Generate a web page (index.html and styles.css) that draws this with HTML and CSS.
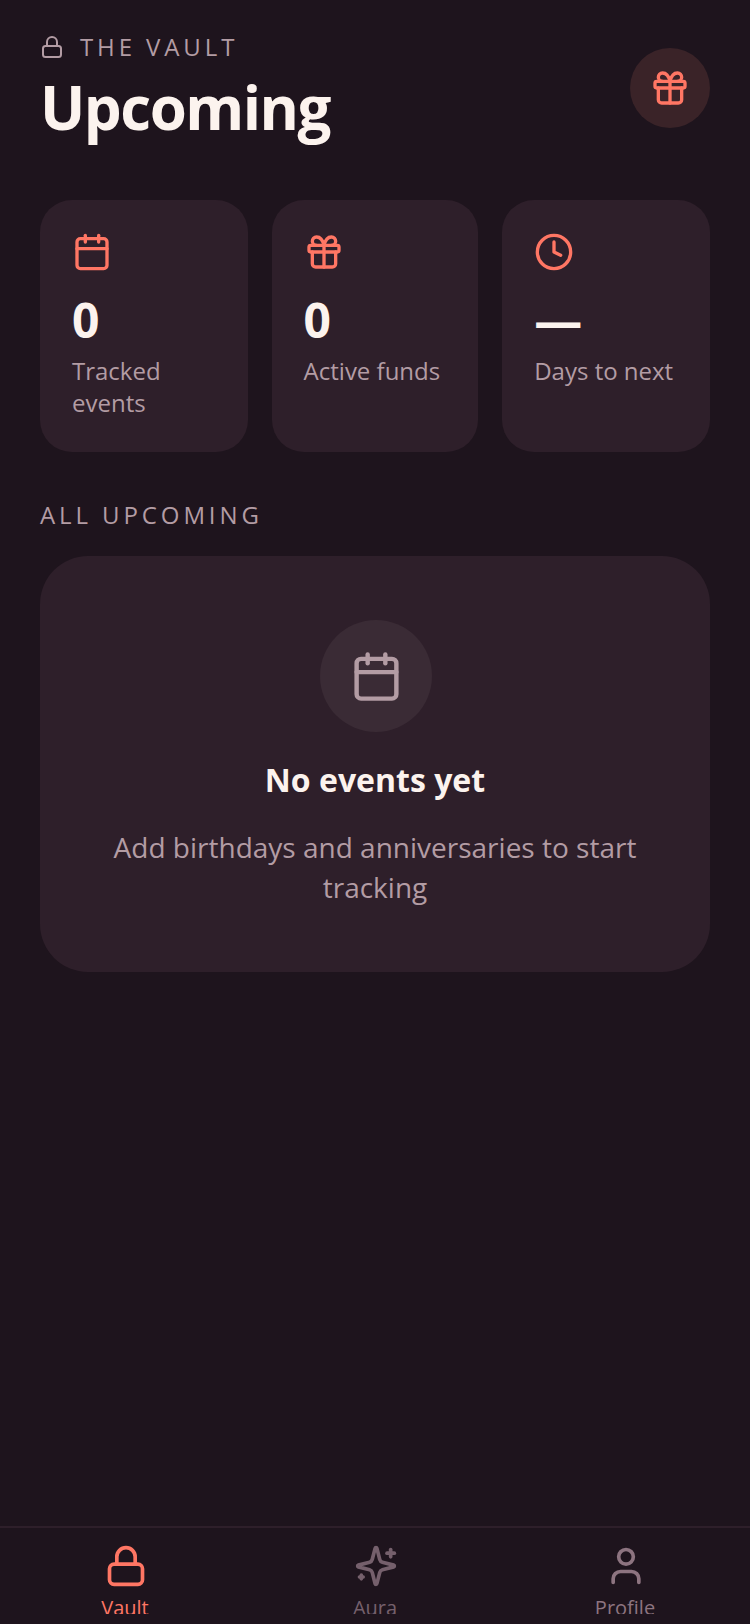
FILE: index.html
```html
<!DOCTYPE html>
<html lang="en">
<head>
<meta charset="utf-8">
<title>Upcoming</title>
<link rel="stylesheet" href="styles.css">
</head>
<body>
<div class="app">
  <main class="main">
    <header class="header">
      <div class="heading">
        <div class="eyebrow">
          <svg class="eyebrow-icon" viewBox="0 0 24 24"><rect x="3" y="11" width="18" height="11" rx="2.5"/><path d="M7 11V7a5 5 0 0 1 10 0v4"/></svg>
          <span>THE VAULT</span>
        </div>
        <h1 class="title">Upcoming</h1>
      </div>
      <div class="gift-btn">
        <svg class="icon-40" viewBox="0 0 24 24"><rect x="3" y="8" width="18" height="4" rx="1"/><path d="M12 8v13"/><path d="M19 12v7a2 2 0 0 1-2 2H7a2 2 0 0 1-2-2v-7"/><path d="M7.5 8a2.5 2.5 0 0 1 0-5A4.8 8 0 0 1 12 8a4.8 8 0 0 1 4.5-5 2.5 2.5 0 0 1 0 5"/></svg>
      </div>
    </header>

    <section class="stats">
      <div class="stat">
        <svg class="icon-40" viewBox="0 0 24 24"><path d="M8 2v4"/><path d="M16 2v4"/><rect x="3" y="4" width="18" height="18" rx="2"/><path d="M3 10h18"/></svg>
        <div class="stat-value">0</div>
        <div class="stat-label">Tracked events</div>
      </div>
      <div class="stat">
        <svg class="icon-40" viewBox="0 0 24 24"><rect x="3" y="8" width="18" height="4" rx="1"/><path d="M12 8v13"/><path d="M19 12v7a2 2 0 0 1-2 2H7a2 2 0 0 1-2-2v-7"/><path d="M7.5 8a2.5 2.5 0 0 1 0-5A4.8 8 0 0 1 12 8a4.8 8 0 0 1 4.5-5 2.5 2.5 0 0 1 0 5"/></svg>
        <div class="stat-value">0</div>
        <div class="stat-label">Active funds</div>
      </div>
      <div class="stat">
        <svg class="icon-40" viewBox="0 0 24 24"><circle cx="12" cy="12" r="10"/><path d="M12 6v6l4 2"/></svg>
        <div class="stat-value">—</div>
        <div class="stat-label">Days to next</div>
      </div>
    </section>

    <h2 class="section-title">ALL UPCOMING</h2>

    <section class="empty">
      <div class="empty-circle">
        <svg class="icon-53" viewBox="0 0 24 24"><path d="M8 2v4"/><path d="M16 2v4"/><rect x="3" y="4" width="18" height="18" rx="2"/><path d="M3 10h18"/></svg>
      </div>
      <h3 class="empty-title">No events yet</h3>
      <p class="empty-text">Add birthdays and anniversaries to start tracking</p>
    </section>
  </main>

  <nav class="nav">
    <div class="tab tab-active">
      <svg class="tab-icon" viewBox="0 0 24 24"><rect x="3" y="11" width="18" height="11" rx="2.5"/><path d="M7 11V7a5 5 0 0 1 10 0v4"/></svg>
      <span class="tab-label">Vault</span>
    </div>
    <div class="tab tab-aura">
      <svg class="tab-icon" viewBox="0 0 24 24"><path d="M9.937 15.5A2 2 0 0 0 8.5 14.063l-6.135-1.582a.5.5 0 0 1 0-.962L8.5 9.936A2 2 0 0 0 9.937 8.5l1.582-6.135a.5.5 0 0 1 .963 0L14.063 8.500A2 2 0 0 0 15.5 9.937l6.135 1.581a.5.5 0 0 1 0 .964L15.500 14.063a2 2 0 0 0-1.437 1.437l-1.582 6.135a.5.5 0 0 1-.963 0z"/><path d="M20 3v4"/><path d="M22 5h-4"/><path d="M4 17v2"/><path d="M5 18H3"/></svg>
      <span class="tab-label">Aura</span>
    </div>
    <div class="tab tab-profile">
      <svg class="tab-icon" viewBox="0 0 24 24"><circle cx="12" cy="7" r="4"/><path d="M19 21v-2a4 4 0 0 0-4-4H9a4 4 0 0 0-4 4v2"/></svg>
      <span class="tab-label">Profile</span>
    </div>
  </nav>
</div>
</body>
</html>
```

FILE: styles.css
```css
* { box-sizing: border-box; margin: 0; padding: 0; }
html, body { height: 100%; }
body {
  background: #1e141d;
  font-family: "Open Sans", "Liberation Sans", sans-serif;
  color: #fcf3ee;
  overflow: hidden;
}
svg { fill: none; stroke: currentColor; stroke-width: 2; stroke-linecap: round; stroke-linejoin: round; display: block; flex: none; }
.app { height: 1624px; display: flex; flex-direction: column; }
.main { flex: 1; padding: 31px 40px 0; }

.header { display: flex; justify-content: space-between; align-items: flex-start; }
.eyebrow { display: flex; align-items: center; gap: 16px; height: 30px; color: #b39ca4; font-size: 24px; font-weight: 400; letter-spacing: 3.9px; }
.eyebrow-icon { width: 24px; height: 24px; margin-top: 2px; }
.title { margin-top: 10px; font-size: 60px; line-height: 72px; font-weight: 700; letter-spacing: -1.5px; color: #fcf3ee; }
.gift-btn { width: 80px; height: 80px; margin-top: 17px; border-radius: 50%; background: #3a2328; display: flex; align-items: center; justify-content: center; }
.icon-40 { width: 40px; height: 40px; color: #ff7664; }
.icon-53 { width: 53px; height: 53px; color: #b39ca4; }

.stats { display: grid; grid-template-columns: 207.6fr 206.6fr 207.8fr; gap: 24px; margin-top: 57px; }
.stat { background: #2e1f2a; border-radius: 32px; padding: 32px; height: 252px; }
.stat-value { margin-top: 17px; font-size: 48px; line-height: 62px; font-weight: 700; color: #fcf3ee; }
.stat-label { margin-top: 4px; font-size: 24px; line-height: 32px; color: #b39ca4; }

.section-title { margin-top: 48px; font-size: 24px; line-height: 30px; font-weight: 400; letter-spacing: 3.9px; color: #b39ca4; }

.empty { margin-top: 26px; background: #2e1f2a; border-radius: 48px; height: 416px; padding: 64px 48px 0; display: flex; flex-direction: column; align-items: center; text-align: center; }
.empty-circle { width: 112px; height: 112px; margin-left: 2px; border-radius: 50%; background: #3a2b35; display: flex; align-items: center; justify-content: center; }
.empty-title { margin-top: 24px; font-size: 32px; line-height: 48px; font-weight: 700; color: #fcf3ee; }
.empty-text { margin-top: 23px; font-size: 28px; line-height: 40px; color: #b39ca4; }

.nav { height: 98px; flex: none; border-top: 2px solid #2e1f2a; display: grid; grid-template-columns: repeat(3, 1fr); padding: 0 0 10px; }
.tab { display: flex; flex-direction: column; align-items: center; padding-top: 16px; overflow: hidden; }
.tab-icon { width: 44px; height: 44px; margin-left: 2px; }
.tab-label { margin-top: 6px; font-size: 20px; line-height: 28px; }
.tab-active { color: #ff7664; }
.tab-aura { color: #75606c; }
.tab-profile { color: #8d7480; }
```
